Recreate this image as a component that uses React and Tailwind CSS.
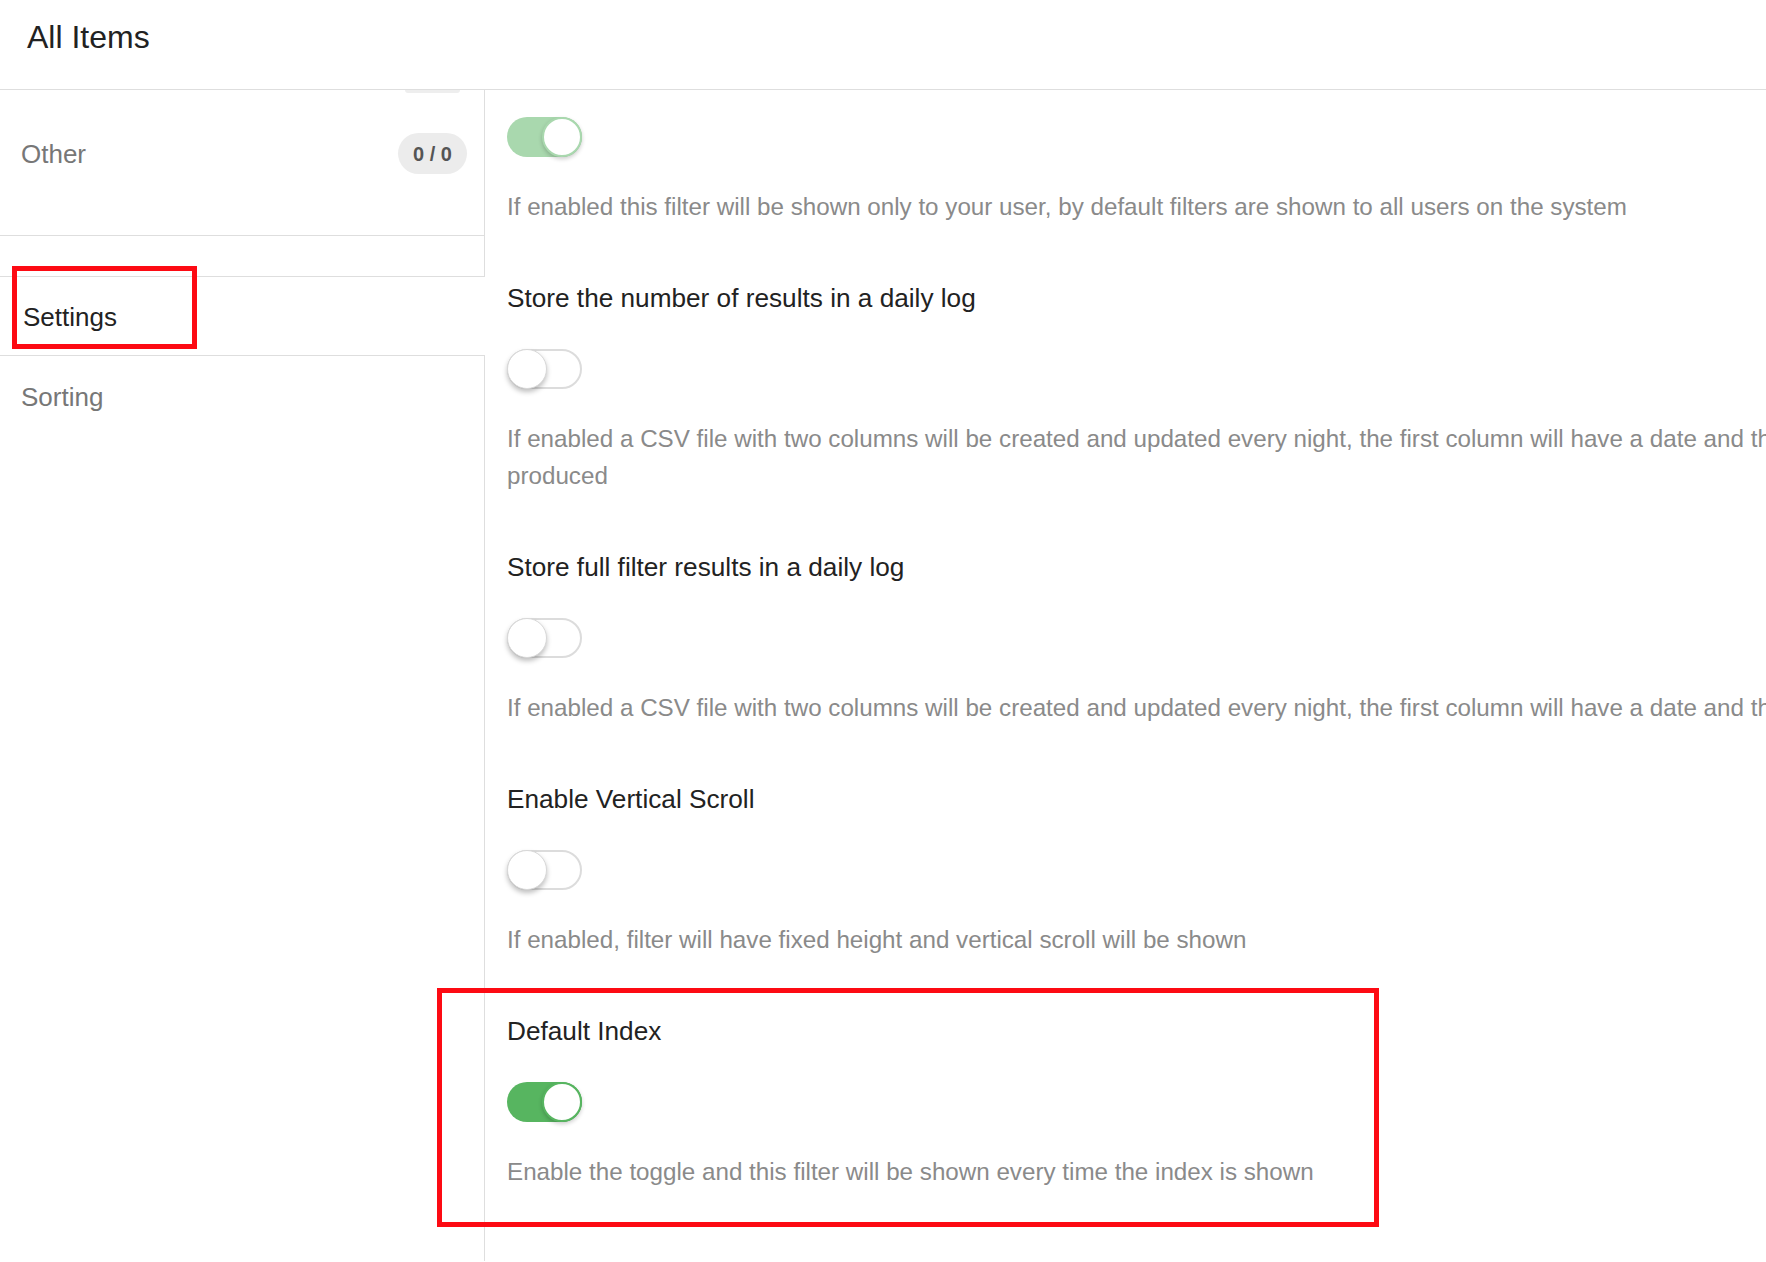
import React from 'react';

// Toggle switch, drawn the way the filter settings page shows it
const Toggle = ({ on = false, faded = false }) => {
  if (on) {
    return (
      <div
        className={`relative h-[40px] w-[75px] rounded-full ${faded ? 'bg-[#a9d8ae]' : 'bg-[#57b560]'}`}
      >
        <div
          className={`absolute right-0 top-0 h-[40px] w-[40px] rounded-full border-2 bg-white shadow-[0_2px_4px_rgba(0,0,0,0.2)] ${
            faded ? 'border-[#a9d8ae]' : 'border-[#57b560]'
          }`}
        />
      </div>
    );
  }
  return (
    <div className="relative h-[40px] w-[75px] rounded-full border-2 border-[#dcdcdc] bg-white">
      <div className="absolute -left-[2px] -top-[2px] h-[40px] w-[40px] rounded-full border border-[#d8d8d8] bg-white shadow-[0_3px_5px_rgba(0,0,0,0.25)]" />
    </div>
  );
};

const Setting = ({ title, lines, on, faded, first, highlight }) => (
  <div className={`relative ${first ? 'pt-[27px]' : 'mt-[57.5px]'}`}>
    {highlight && (
      <div className="pointer-events-none absolute -left-[70px] -top-[27px] h-[239px] w-[942px] border-[5px] border-[#fd0a13]" />
    )}
    {title && (
      <div className="mb-[35px] whitespace-nowrap text-[26.2px] leading-[32px] text-[#222]">{title}</div>
    )}
    <Toggle on={on} faded={faded} />
    <div className="mt-[30.5px] text-[24.2px] leading-[37px] text-[#8a8a8a]">
      {lines.map((line) => (
        <div key={line} className="whitespace-nowrap">
          {line}
        </div>
      ))}
    </div>
  </div>
);

export default function App() {
  return (
    <div
      className="h-[1262px] w-[1766px] overflow-hidden bg-white"
      style={{ fontFamily: '"Liberation Sans", Arial, sans-serif' }}
    >
      {/* Header */}
      <div className="h-[90px] border-b border-[#dedede] pl-[27px] pt-[17px]">
        <h1 className="text-[32px] leading-[40px] text-[#222]">All Items</h1>
      </div>

      <div className="flex h-[1171px]">
        {/* Sidebar */}
        <div className="relative flex w-[485px] shrink-0 flex-col">
          <div className="h-[146px] border-b border-r border-[#dedede]">
            <div className="ml-[405px] h-[3px] w-[55px] rounded-b-full bg-[#eeeeee]" />
            <div className="mt-[40px] flex items-center justify-between pl-[21px] pr-[17px]">
              <span className="text-[26px] leading-[32px] text-[#777]">Other</span>
              <span className="flex h-[41px] w-[69px] items-center justify-center rounded-full bg-[#ececec] text-[20px] font-bold text-[#555]">
                0 / 0
              </span>
            </div>
          </div>
          <div className="h-[41px] border-b border-r border-[#dedede]" />
          <div className="flex h-[79px] items-center border-b border-[#dedede] pl-[23px] pt-[2px]">
            <span className="text-[26px] leading-[32px] text-[#222]">Settings</span>
          </div>
          <div className="flex-1 border-r border-[#dedede] pl-[21px] pt-[25px]">
            <span className="text-[26px] leading-[32px] text-[#777]">Sorting</span>
          </div>
          <div className="pointer-events-none absolute left-[12px] top-[176px] h-[83px] w-[185px] border-[5px] border-[#fd0a13]" />
        </div>

        {/* Settings content */}
        <div className="min-w-0 flex-1 pl-[22px]">
          <Setting
            first
            on
            faded
            lines={[
              'If enabled this filter will be shown only to your user, by default filters are shown to all users on the system',
            ]}
          />
          <Setting
            title="Store the number of results in a daily log"
            lines={[
              'If enabled a CSV file with two columns will be created and updated every night, the first column will have a date and the second the number of results',
              'produced',
            ]}
          />
          <Setting
            title="Store full filter results in a daily log"
            lines={[
              'If enabled a CSV file with two columns will be created and updated every night, the first column will have a date and the second the full results',
            ]}
          />
          <Setting
            title="Enable Vertical Scroll"
            lines={['If enabled, filter will have fixed height and vertical scroll will be shown']}
          />
          <Setting
            title="Default Index"
            on
            highlight
            lines={['Enable the toggle and this filter will be shown every time the index is shown']}
          />
        </div>
      </div>
    </div>
  );
}
